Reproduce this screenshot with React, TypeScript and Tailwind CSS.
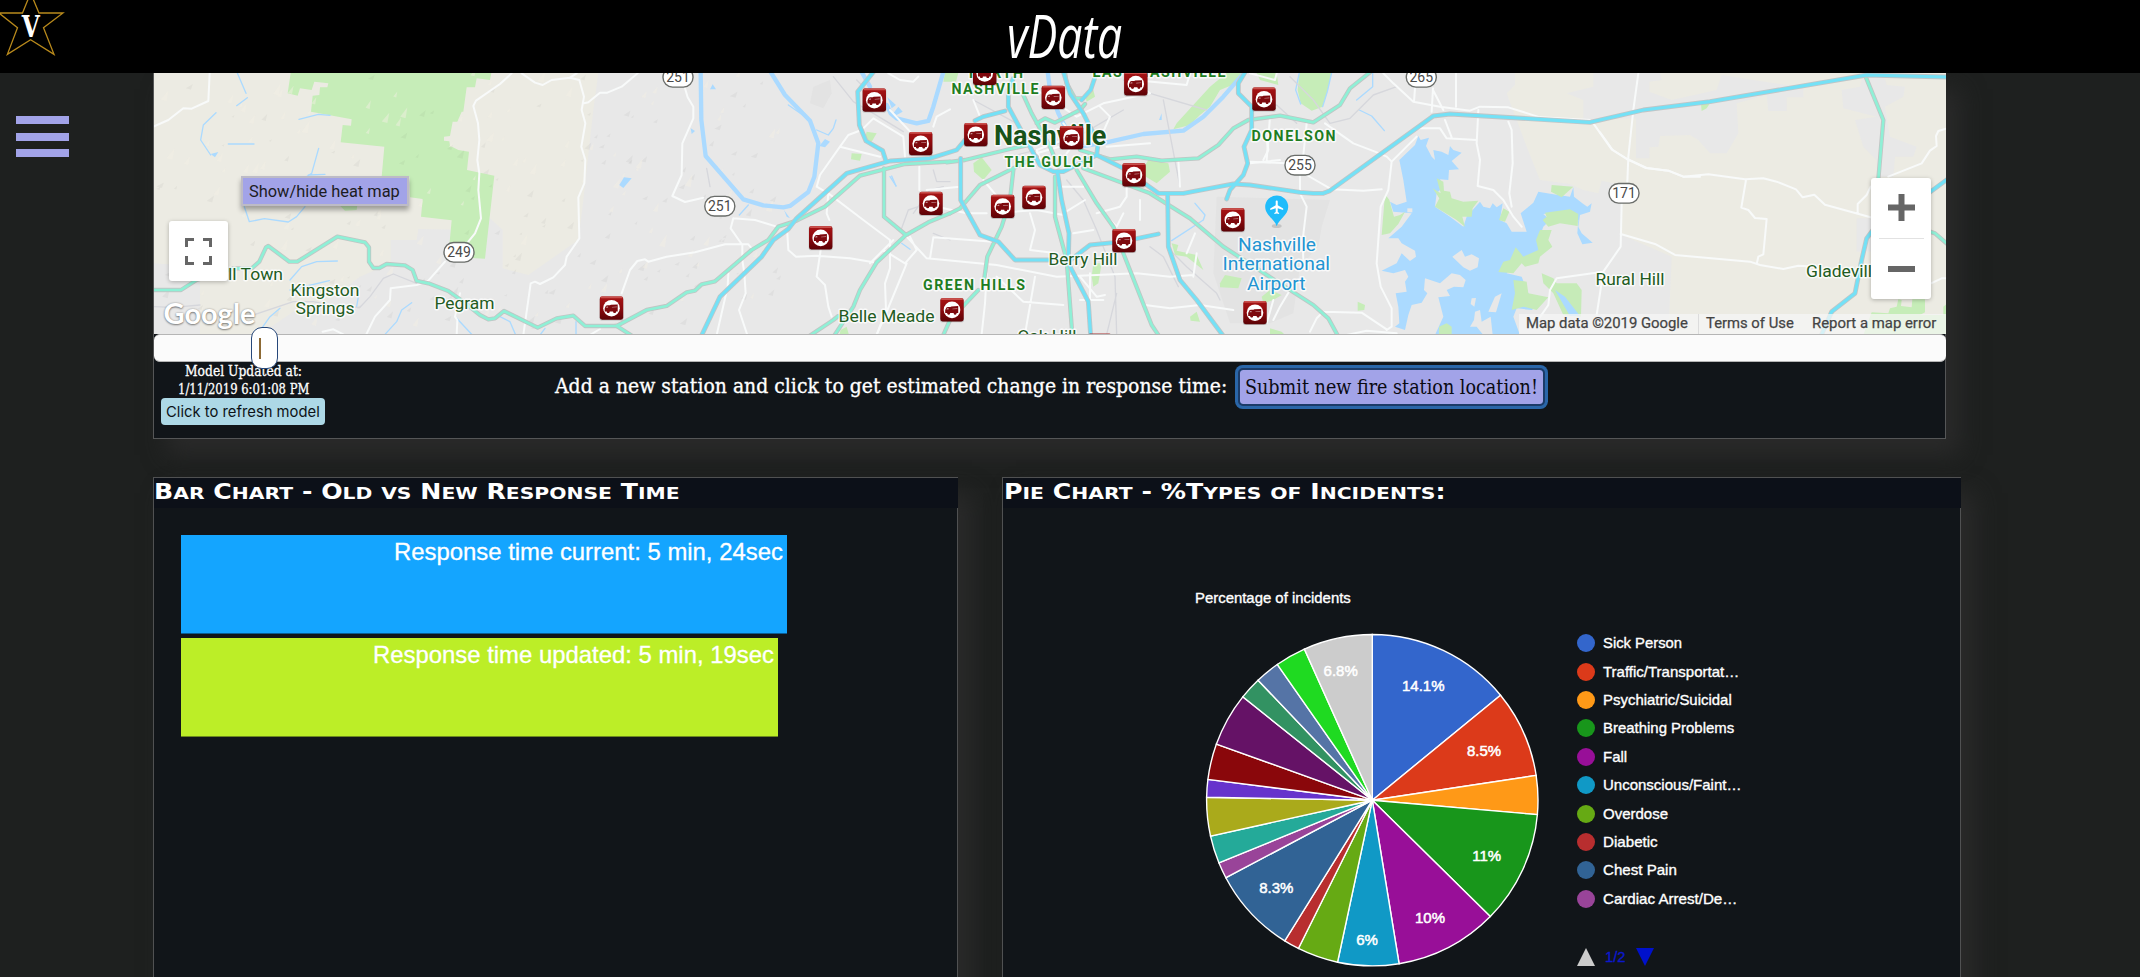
import { useLayoutEffect, useRef, useState, type ReactNode } from "react";

/* Squeezes or stretches one line of text to a given width. */
function Fit({ width, className = "", children }: { width: number; className?: string; children: ReactNode }) {
  const ref = useRef<HTMLSpanElement>(null);
  const [scale, setScale] = useState(1);
  useLayoutEffect(() => {
    if (ref.current) setScale(width / ref.current.offsetWidth);
  }, [width]);
  return (
    <span className={"inline-block whitespace-nowrap " + className} style={{ width }}>
      <span ref={ref} className="inline-block origin-left" style={{ transform: `scaleX(${scale})` }}>
        {children}
      </span>
    </span>
  );
}

function Copperplate({ text, width }: { text: string; width: number }) {
  return (
    <Fit width={width} className="font-['DejaVu_Sans'] text-[20.5px] leading-[29px] font-bold text-white">
      {text.split("").map((c, i) =>
        /[a-z]/.test(c) ? (
          <span key={i} className="text-[16.5px]">
            {c.toUpperCase()}
          </span>
        ) : (
          c
        )
      )}
    </Fit>
  );
}

/* ---- Map geometry. Every shape is given in one of six sheets, drawn at 3x. ---- */

type Shape = [sheet: keyof typeof SHEETS, d: string];
const SHEETS = {
  a: "translate(0 0) scale(.33333)",
  b: "translate(500 60) scale(.33333)",
  c: "translate(850 0) scale(.33333)",
  d: "translate(1250 60) scale(.33333)",
  e: "translate(1600 60) scale(.33333)",
  f: "translate(360 60) scale(.33333)",
};

const CREAM: Shape[] = [
  ["a", "M460,219H1795L1780,330L1750,600L1735,720L1585,825L1508,805V690L1465,650L1440,690L1255,687L1250,720H1172V790L1080,830L980,905L880,935L780,1003H600V800L460,790Z"],
  ["d", "M770,100L795,75V38H2090V830H1255L1265,590L1115,525V375L1055,362L1045,400L1000,390L960,372L870,360L830,260L800,180Z"],
];
const GREY: Shape[] = [
  ["d", "M1030,38V80L950,100L1000,120V180L1160,175V38Z"],
  ["e", "M108,38H180L185,60L148,65V95L215,120L350,90L365,45L460,60L560,75L610,85V112H560V153H505L500,105L410,130L415,220L380,280H330L295,240L270,225L180,228L175,260L148,262V295H108Z"],
  ["e", "M725,90L780,80L790,40H850L860,75L915,80L910,110L855,140L870,230L950,260L940,290L885,290L880,350H830V300L790,260L765,180L830,170L730,145Z"],
  ["e", "M770,475h45v100h-45z"],
  ["a", "M460,790L600,800V920L460,925Z"],
];
const AIRPORT: Shape[] = [
  ["d", "M-100,410L240,420L215,500L205,560L150,620L130,760L60,790H-60L-110,640Z"],
  ["b", "M940,80L990,60L995,100L970,145L930,130Z"],
];
const GREEN: Shape[] = [
  ["a", "M872,219L863,280L893,287L900,265L935,270L943,245L985,250L982,262L960,262L958,285L938,287L933,335L1055,358L1053,377L1028,375L1022,427L1153,440L1145,530L1228,530L1230,592L1268,597L1263,650L1355,661L1349,725L1345,770L1455,776L1483,527L1401,510L1407,455L1375,450L1350,437L1348,424L1332,422V410L1350,408L1358,365L1372,365L1385,335L1390,335L1400,262L1425,262L1430,235L1470,240L1474,219Z"],
  ["a", "M1018,615H1072L1070,630L1035,632Z"],
  ["c", "M285,219H325L318,245H280Z"],
  ["c", "M980,370L1080,260L1130,219H1180L1160,250L1110,270L1080,320L1050,345L1020,375L970,388Z"],
  ["c", "M1220,219H1280L1285,255L1230,240Z"],
  ["c", "M370,490L395,472L425,510L400,540L372,515Z"],
  ["c", "M5,460L35,462L30,482L3,478Z"],
  ["c", "M50,395L80,400L65,425L45,415Z"],
  ["c", "M895,480L955,490L960,515L920,550L870,520Z"],
  ["c", "M730,790H755L745,850L730,860L725,830Z"],
  ["c", "M1110,850L1125,825L1175,835L1165,865L1110,862Z"],
  ["c", "M1020,950L1040,935L1050,965L1022,962Z"],
  ["c", "M1235,890L1260,870L1295,885L1270,900L1240,910Z"],
  ["c", "M965,730L985,735L980,752L1040,765L1060,810L1010,770L975,765Z"],
  ["c", "M705,285L730,270L735,290L710,305Z"],
  ["b", "M1022,810L1040,800L1047,825H1018Z"],
  ["d", "M148,38H245L232,95L218,140L185,152L152,130L143,90Z"],
  ["d", "M323,725L345,735L343,750L323,752Z"],
  ["d", "M60,805L95,815L110,830H60Z"],
  ["e", "M303,132L330,130L320,145L305,153Z"],
  ["e", "M815,757L865,760L870,745L890,740L895,718L905,720L903,738L935,742L937,718H975V757L960,765H1038V825H790Z"],
  ["e", "M1030,740L1040,732V765H1030Z"],
];
const LAKE: Shape[] = [
  ["d", "M505,228L512,240L537,233L528,258L545,290L555,300L550,270L575,275L595,285L600,258L610,270L635,278L605,303L627,328L597,330L595,360L570,358L580,380L560,400L555,440L600,470L640,500L650,470L690,425L700,440L720,445L728,430L740,442L758,430L750,480L770,490L785,515L830,515L812,460L850,428L865,395L905,402L960,410L970,382L972,410L1000,432L1012,440L1025,430L1020,455L990,465L985,500L995,520L1028,548L997,553L982,520L985,480L950,455L880,462L900,480L880,500L865,540L870,570L835,612L800,600L770,640L815,650L835,700L850,720L870,735L845,750L800,745L790,770L810,825H555L580,770L565,712L600,708L590,690L612,680L640,682L647,660L630,645L605,640L570,670L525,655L522,690L532,700L515,728L485,735L475,765L465,810L435,800L448,790L445,740L437,700L470,695L465,665L475,650L465,630L430,640L395,632L440,610L455,580L480,603L498,590L495,572L455,550L445,535L415,535L455,500L485,460L430,455L420,425L440,435L470,425L460,360L448,300L495,255Z"],
  ["b", "M358,375L372,352L395,355L370,384Z"],
  ["b", "M630,88L638,73L648,88Z"],
  ["b", "M958,258L975,237L990,245L975,262Z"],
  ["b", "M572,205L585,213L575,222Z"],
  ["b", "M1162,112L1188,135L1175,145ZM1180,160L1195,140L1208,155L1190,165Z"],
  ["b", "M852,450L870,475L860,470Z"],
  ["c", "M927,360L935,340V360Z"],
  ["a", "M632,462L655,456L645,472Z"],
];
const ISLANDS: Shape[] = [
  ["d", "M607,590L635,570L645,590L665,583L687,595L683,622L660,632L640,622Z"],
  ["d", "M735,710L755,700L738,757L715,755Z"],
  ["d", "M665,715L678,714L673,740L662,732Z"],
  ["d", "M660,800L672,780L675,755L690,750L695,785L722,770L728,825H700L680,800Z"],
  ["d", "M472,445h15v12h-15z"],
];
const SHORE: Shape[] = [
  ["d", "M560,355L580,365L582,392L600,395L605,415L640,425L685,422L668,445L665,470L637,470L645,500L620,480L555,440L568,415L548,385L572,400Z"],
  ["d", "M405,402L418,420L432,470L450,465L465,455L445,492L420,520L395,525Z"],
  ["d", "M905,375L970,380L935,412L903,395Z"],
  ["d", "M885,458L960,448L985,462L983,498L930,490L895,500L878,480L890,470Z"],
  ["d", "M870,510L905,510L895,540L907,560L870,590L865,610L825,620L815,610L790,640L745,636L760,605L780,600L797,562L820,590L865,570L858,540Z"],
  ["d", "M790,660L830,665L835,700L895,712L860,750L820,740L785,750L795,700Z"],
  ["d", "M875,640L910,655L920,670L980,670L995,690L993,770L940,765L910,700L880,670Z"],
  ["d", "M747,480L760,445L778,455L765,485Z"],
  ["d", "M567,800L590,790L605,800V825H567Z"],
];
const INLETS: Shape[] = [["d", "M915,690L945,710L990,768H960Z"]];

const RIVERS: Shape[] = [
  ["b", "M602,36L604,180L617,288L730,418L790,436L850,442L870,438L925,396L943,350L955,250L930,182L855,105L812,36"],
  ["b", "M1085,36L1110,80M1160,135L1172,160L1190,175L1250,190L1285,183L1300,140L1330,36"],
  ["c", "M593,215L600,270L625,340L650,390L690,440L770,427L880,402L1000,392L1060,350L1120,290L1185,215"],
];
const CREEKS: Shape[] = [
  ["a", "M712,219L738,280M742,293L710,317M648,338L610,375L602,420L632,465M685,432H762M897,358L955,343L990,346M956,445L935,520L890,550M925,525L975,523"],
  ["a", "M733,620L748,665L793,656L865,666L890,650L915,620M870,840L905,800L950,785L1012,783M870,870L988,842M785,985L810,950L840,925M1155,1003L1190,965L1205,930L1235,908M1370,955L1415,1003M1070,920L1075,890"],
  ["b", "M0,770L30,785L47,825M120,825L135,805M228,785V825M718,465L745,435M865,135L930,180M950,210L985,225L1000,205L1008,180M1175,348L1188,378"],
  ["c", "M120,530L138,558M1035,610L1065,645L1060,660L965,722M155,730L180,748"],
  ["d", "M148,38L137,90L152,132M245,38L232,95L218,140M368,38V80L320,120M328,150L365,168L403,212"],
];
const RAILS: Shape[] = [
  ["a", "M460,920L520,922L600,915M760,945L880,905L940,905L1010,920L1080,922L1110,890L1150,835L1180,822L1250,850"],
  ["c", "M20,240L50,270M190,640L240,570L280,560M800,1003L795,830L740,690L700,600L650,540M770,1003L800,880M900,740L940,770L985,860M940,300L990,560M960,750L1010,800L1100,880L1110,900M370,300L500,370L540,420M820,330L700,400L600,440L480,470M1070,330L900,280L820,240M300,720L250,700"],
  ["d", "M120,50L190,120L240,190L300,175L370,105L440,80M0,140L80,135L140,190"],
  ["b", "M1000,50L1060,125L1120,160L1210,215M1205,505L1225,450L1255,440M1300,330L1310,365H1350M620,325L630,380"],
];
const STREETS: Shape[] = [
  ["f", "M485,40L525,68L548,75L575,60L630,53L658,60L672,110L665,150L676,190L664,260L676,300L673,370L655,412L658,535L620,590L615,615L580,652L540,672L525,665L512,670L490,825M630,53L650,40M672,130L685,127L720,98L742,98L785,80L833,40"],
  ["f", "M455,40L420,72L348,122L340,138L354,190L358,240L352,300L358,340L355,390L363,475L345,520L325,545M255,605L205,662L170,675L92,685L90,720L45,770L18,825M300,700L285,770L292,780L290,825"],
  ["a", "M460,380L505,360L550,325L575,326L625,303L629,219M968,995L1000,988L1030,1003"],
  ["b", "M365,700L390,630L412,603L435,598L445,605L500,590L585,577L675,553H745L755,565M555,85L563,112L580,140V175L547,250L545,345L517,408L555,426L610,413M700,475L765,480L830,500M700,475L692,505L727,555V600L733,640L737,700L717,750L742,825M685,640L683,680L650,825M270,825L300,807"],
  ["b", "M862,520L865,570L888,590L950,587L1050,595L1120,607M962,570L950,650L975,675L985,740L995,770M950,380L985,400L1090,480L1170,540V625L1155,670L1158,750L1130,825M1020,260L960,345L950,380M1020,260L1045,225L1085,210L1120,175L1210,230L1215,290M1020,260L1140,290M1165,40L1200,60L1240,65L1255,50M985,400L980,460L988,480M1258,320V390M1300,200L1310,170L1350,148"],
  ["c", "M170,710L230,775L440,795L620,830L860,820L960,830L1030,825M250,712L430,725M250,712L240,775M180,710L200,750L165,790M430,640L560,630L640,645M540,640L555,690L540,750L620,760M555,830L525,1003M690,830L740,890L765,885M410,820L405,910L395,1003M440,830L520,905L640,915M985,480L990,560M740,640L810,620L830,590V560M780,660L800,680L820,640M1200,490L1290,480M1250,480L1260,350M885,915L960,925L1050,915L1150,930M1010,760L1035,700M100,750L165,790M130,720L60,790M170,790L100,960L80,1003M1040,760L1030,830"],
  ["c", "M370,300L390,350M120,330L185,400M560,270L680,350L760,310L900,280L850,240L1010,255L1020,219M750,320L780,350L740,440M640,370L680,420L650,460M560,460L700,420M580,500L560,450L640,420M400,540L450,600L430,640M330,560L230,570M770,440L900,430M870,600V660M260,620L350,640L410,640M1270,900L1250,970M720,820V970M690,900H760M620,530V560H700M705,600L640,640M670,700L730,690"],
  ["d", "M400,40L430,70L490,125L570,140L660,152L690,140L775,142L870,172L1020,180M549,85L545,155M618,40V140M495,85L492,125M549,90L580,150M1030,190L1085,268L1130,297L1190,324L1255,332L1300,350H1350M1165,40L1150,150L1135,290L1132,365M1115,430L1112,560L1060,635L920,655L900,690L895,735L850,800M1060,635L1040,765"],
  ["d", "M500,205H570L590,235L680,240M605,232L585,180M500,230L425,305L415,390L392,440L380,610L392,680L425,745V800L410,810M225,190L310,250L375,275L410,290L425,305M685,150L680,250L690,300L683,378L730,390L760,420L790,470L815,500M775,185L785,210L788,310L778,400L785,440"],
  ["d", "M150,345V400L170,440L158,540L160,600M170,345L245,388L340,392L395,388M160,285L170,190M0,305L110,310M40,300L55,270L50,240M220,755L335,758L410,808M180,815L200,775L220,755M290,825L350,812L440,820M70,780L90,740L120,690M0,40L75,60L80,40"],
  ["e", "M0,217L38,270L82,297L138,324L205,332L250,350L325,343L435,358L490,355L530,365L588,388L608,412L643,404L675,434L812,472M438,360L424,443L445,450L465,474L500,477L490,583L475,590L470,612M62,522L165,552L225,585L450,605L480,615L550,627L595,617L650,620M773,460V432L800,405L812,380M865,350L965,310L990,272L1010,258L1008,228L1015,213L1038,206M993,670L1025,655H1038"],
];
const ARTERIES: Shape[] = [
  ["a", "M456,870H543L590,840L700,805H755L778,785L798,742L805,738L868,785H892L1012,710L1095,727L1107,742V785L1120,804H1138L1160,792L1215,796L1238,810L1250,843L1285,850L1345,873L1390,905L1440,945L1465,958L1485,955L1512,933L1613,983L1670,955L1720,947L1755,978H1850L1940,930L2000,918L2060,877L2085,872L2105,853L2145,844L2255,750L2305,720L2335,680L2390,662L2475,620L2580,527L2715,492L2850,485"],
  ["b", "M350,798L400,830M1152,325V470L1218,525L1130,607L1080,690L1060,740L1002,828M1218,525L1285,487L1350,460M928,828L1000,780L1015,768"],
  ["c", "M290,487L345,480L480,447L560,430M300,640L330,625L390,555L500,500L560,470M490,510L480,600L455,680L412,770L403,835M385,870L300,960L280,1005M520,285L545,340L600,440L625,500M560,370L585,355L615,368L690,330L705,312M645,217L650,250L675,295H700"],
  ["c", "M615,530V650L650,780L667,1005M680,510L740,610L790,680L820,760L905,975L925,1005M700,505L900,580L1020,655L1120,740L1320,870L1390,915L1435,955L1464,1008M690,450L780,478L860,470L935,482L1045,475L1105,435L1150,385L1195,360L1290,347L1390,367L1470,315L1500,265L1560,217"],
  ["e", "M797,50L850,180L835,358M990,515L1005,520L1042,552"],
];
const HIGHWAYS: Shape[] = [
  ["b", "M1120,36L1073,95L1078,195L1098,243L1148,272L1157,300M603,830L660,710L785,590L820,540L865,507L890,475L1040,340L1170,303L1290,295L1370,270L1395,240"],
  ["c", "M375,362L400,350L465,333M490,235L475,270V320L545,450L570,495L610,515H640L690,490L740,465L745,425L725,390L700,340L660,280L640,215M740,465L820,505L925,580H1000L1150,552L1200,555L1350,577L1390,580H1420L1440,572L1750,348L1800,342L2220,367L2380,330L2580,305L3050,225L3290,231"],
  ["c", "M953,585L955,740L990,840L1040,900L1120,1008M622,515L635,600L657,700L655,790L715,905L722,1008M332,475V600L390,705L445,725L495,780H600M655,785L720,735L790,728L860,716L925,702M1185,217L1165,250V280L1205,320V390L1182,440L1193,490L1180,525L1140,570L1130,597M740,217L722,270L695,300"],
  ["e", "M985,400L1042,358M830,495L800,535L785,600L765,700L695,755L663,828"],
];

function Fill({ shapes, color }: { shapes: Shape[]; color: string }) {
  return (
    <g fill={color}>
      {shapes.map(([s, d], i) => (
        <path key={i} transform={SHEETS[s]} d={d} />
      ))}
    </g>
  );
}
function Line({ shapes, color, width }: { shapes: Shape[]; color: string; width: number }) {
  return (
    <g fill="none" stroke={color} strokeWidth={width} strokeLinejoin="round" strokeLinecap="round">
      {shapes.map(([s, d], i) => (
        <path key={i} transform={SHEETS[s]} d={d} />
      ))}
    </g>
  );
}

/* Hill shading: short slivers strewn over the western half. */
const HILLS = (() => {
  let seed = 11;
  const rnd = () => (seed = (seed * 16807) % 2147483647) / 2147483647;
  return Array.from({ length: 260 }, () => {
    const x = 156 + rnd() * 620;
    const y = 75 + rnd() * 255;
    const l = 3 + rnd() * 5;
    const k = rnd();
    return { d: `M${x.toFixed(1)},${y.toFixed(1)}l${l.toFixed(1)},${(-l * (0.5 + k)).toFixed(1)}l${(-l / 4).toFixed(1)},${(l * (0.7 + k)).toFixed(1)}z`, light: k > 0.55 };
  });
})();

type Label = [text: string, x: number, y: number, width: number, kind: "town" | "area" | "city" | "poi"];
const LABELS: Label[] = [
  ["ll Town", 228, 279.5, 55, "town"],
  ["Kingston", 290.5, 296, 69, "town"],
  ["Springs", 295.5, 314, 59, "town"],
  ["Pegram", 434.5, 309, 60, "town"],
  ["Belle Meade", 838.5, 322, 96, "town"],
  ["Berry Hill", 1048.5, 265, 69, "town"],
  ["Rural Hill", 1595.5, 285, 69, "town"],
  ["Gladevill", 1806, 277, 66, "town"],
  ["Oak Hill", 1017.5, 342, 59, "town"],
  ["GREEN HILLS", 923, 290.3, 102, "area"],
  ["THE GULCH", 1004.5, 166.7, 88.5, "area"],
  ["NORTH", 969, 78.2, 54, "area"],
  ["NASHVILLE", 951.5, 93.7, 87, "area"],
  ["EAST NASHVILLE", 1092.5, 77.2, 133, "area"],
  ["DONELSON", 1251.5, 140.5, 84, "area"],
  ["Nashville", 994, 145, 112.5, "city"],
  ["Nashville", 1238, 251, 78, "poi"],
  ["International", 1222.5, 270.3, 107.5, "poi"],
  ["Airport", 1247, 289.7, 58.5, "poi"],
];
const KIND = {
  town: "fill-[#1f5c22] text-[17.3px]",
  area: "fill-[#1e7d22] text-[14.2px] font-bold",
  city: "fill-[#175218] text-[28.5px] font-bold",
  poi: "fill-[#2294d2] text-[19px]",
};

const SHIELDS: [string, number, number][] = [
  ["249", 459, 252.3],
  ["251", 678, 77.3],
  ["251", 719.8, 206.2],
  ["255", 1300, 165.2],
  ["265", 1421.3, 77.3],
  ["171", 1624, 193.3],
];

const STATIONS: [number, number][] = [
  [874.3, 100.2], [920.7, 143.7], [975.8, 134.7], [984.7, 73.4], [1053.3, 97.5], [1135.8, 84], [1264, 99.2], [1071.5, 137.7],
  [1134, 175], [931, 203.5], [1002.7, 206.5], [1034, 197.5], [1124, 240.7], [1232.8, 219.9], [952, 309.9], [1255, 312.7],
  [820.7, 237.9], [611.5, 308.2], [1099.7, 345.4],
];

function Station({ x, y }: { x: number; y: number }) {
  return (
    <g transform={`translate(${x} ${y})`}>
      <rect x="-12" y="-11.8" width="24" height="24.2" rx="2.6" fill="#00000030" />
      <rect x="-11.7" y="-11.7" width="23.4" height="23.2" rx="2.4" fill="url(#station)" />
      <rect x="-11" y="-11.6" width="22" height="1.6" rx=".8" fill="#c9504c" />
      <circle r="8.3" fill="#fff" />
      <path d="M-6.8,.2L-5.6,-2.4L-4.2,-3H-1.6L-.6,-3.4L6.2,-3.8V3.2H4.6A1.5,1.5 0 0 1 1.6,3.2H-1.8A1.5,1.5 0 0 1 -4.8,3.2H-6.8Z" fill="#7e090e" />
      <path d="M-5.6,-.4L-4.8,-1.8H-3.4V-.4ZM.4,-1.2L5.4,-1.6V-1L.4,-.6Z" fill="#fff" opacity=".55" />
      <circle cx="-3.3" cy="3.5" r="1.1" fill="#7e090e" />
      <circle cx="3.1" cy="3.5" r="1.1" fill="#7e090e" />
    </g>
  );
}

function MapCanvas() {
  return (
    <svg className="block h-[261px] w-[1792px]" viewBox="154 73 1792 261">
      <defs>
        <linearGradient id="station" x1="0" y1="0" x2="0" y2="1">
          <stop offset="0" stopColor="#a81415" />
          <stop offset=".5" stopColor="#8c0a0e" />
          <stop offset="1" stopColor="#5c0206" />
        </linearGradient>
      </defs>
      <rect x="154" y="73" width="1792" height="261" fill="#e8e8e8" />
      <Fill shapes={CREAM} color="#ecebe3" />
      <Fill shapes={GREY} color="#e8e8e8" />
      <Fill shapes={AIRPORT} color="#e3e3e3" />
      <Fill shapes={GREEN} color="#c6edb8" />
      <g>
        {HILLS.map((h, i) => (
          <path key={i} d={h.d} fill={h.light ? "#f3f0e4" : "#000"} opacity={h.light ? 0.45 : 0.035} />
        ))}
      </g>
      <Fill shapes={LAKE} color="#abdaff" />
      <Fill shapes={ISLANDS} color="#e8e8e8" />
      <Fill shapes={SHORE} color="#c6ebb8" />
      <Fill shapes={INLETS} color="#abdaff" />
      <Line shapes={RIVERS} color="#abdaff" width={13} />
      <Line shapes={CREEKS} color="#abdaff" width={4} />
      <Line shapes={RAILS} color="#d6d7dc" width={4} />
      <Line shapes={STREETS} color="#f8fafa" width={6} />
      <Line shapes={ARTERIES} color="#c1c5c4" width={13} />
      <Line shapes={ARTERIES} color="#8ff0d6" width={8} />
      <Line shapes={HIGHWAYS} color="#c1c5c6" width={14.5} />
      <Line shapes={HIGHWAYS} color="#74e1f6" width={9.5} />

      {SHIELDS.map(([n, x, y], i) => (
        <g key={i} transform={`translate(${x} ${y})`}>
          <rect x="-15" y="-9.8" width="30" height="19.6" rx="9.6" fill="#fff" stroke="#6a6d6a" strokeWidth="1.4" />
          <text y="5" textAnchor="middle" className="fill-[#4a4a4a] font-['Roboto'] text-[14px]">
            {n}
          </text>
        </g>
      ))}

      <g transform="translate(1276.7 207)">
        <ellipse cx="0" cy="19" rx="5" ry="2" fill="#00000022" />
        <path d="M0,19.2C-2,12.5,-11.5,8,-11.5,0A11.5,11.5 0 0 1 11.5,0C11.5,8,2,12.5,0,19.2Z" fill="#1fbcfb" />
        <path
          transform="translate(-7.8 -7.9) scale(.68)"
          fill="#fff"
          d="M21 16v-2l-8-5V3.5c0-.83-.67-1.5-1.5-1.5S10 2.67 10 3.5V9l-8 5v2l8-2.5V19l-2 1.5V22l3.5-1 3.5 1v-1.5L13 19v-5.5l8 2.5z"
        />
      </g>

      {LABELS.map(([t, x, y, w, k], i) => (
        <text
          key={i}
          x={x}
          y={y}
          textLength={w}
          lengthAdjust={k === "area" ? "spacing" : "spacingAndGlyphs"}
          stroke="#ffffffcc"
          strokeWidth="3"
          strokeLinejoin="round"
          paintOrder="stroke"
          className={"font-['Roboto'] " + KIND[k]}
        >
          {t}
        </text>
      ))}

      {STATIONS.map(([x, y], i) => (
        <Station key={i} x={x} y={y} />
      ))}
    </svg>
  );
}

/* ---- Pie chart ---- */

const SLICES: [end: number, color: string][] = [
  [50.7, "#3366cc"], [81.4, "#dc3a1a"], [95, "#ff9917"], [134.6, "#18961b"], [170.7, "#980f98"], [192.1, "#1099c6"],
  [206.5, "#66aa14"], [211.9, "#b82e2f"], [242.1, "#316395"], [247.8, "#994499"], [257.5, "#24aa99"], [271, "#aaaa1b"],
  [277.2, "#6633cc"], [289.8, "#8a070b"], [308.6, "#651266"], [316.4, "#329262"], [325, "#5574a6"], [335.8, "#1fda21"],
  [360, "#cccccc"],
];
const PERCENTS: [string, number, number][] = [
  ["14.1%", 1423.3, 685], ["8.5%", 1484, 749.3], ["11%", 1486.7, 854.5], ["10%", 1430, 916.7], ["6%", 1367, 938.2],
  ["8.3%", 1276.3, 886.7], ["6.8%", 1340.7, 669.3],
];
const CX = 1372.3;
const CY = 799.2;
const R = 165.7;

function Pie() {
  const pt = (a: number) => {
    const r = (a * Math.PI) / 180;
    return `${(CX + R * Math.sin(r)).toFixed(2)},${(CY - R * Math.cos(r)).toFixed(2)}`;
  };
  return (
    <svg className="block h-[352px] w-[370px]" viewBox="1190 625 370 352">
      {SLICES.map(([end, color], i) => (
        <path key={i} d={`M${CX},${CY}L${pt(i ? SLICES[i - 1][0] : 0)}A${R},${R} 0 0 1 ${pt(end)}Z`} fill={color} stroke="#fff" strokeWidth="1.4" />
      ))}
      {PERCENTS.map(([t, x, y]) => (
        <text
          key={t}
          x={x}
          y={y + 5.3}
          textAnchor="middle"
          stroke="#fff"
          strokeWidth=".5"
          className="fill-white font-['Liberation_Sans'] text-[15px]"
        >
          {t}
        </text>
      ))}
    </svg>
  );
}

const LEGEND: [string, string, number][] = [
  ["Sick Person", "bg-[#3366cc]", 79],
  ["Traffic/Transportat…", "bg-[#dc3a1a]", 136],
  ["Psychiatric/Suicidal", "bg-[#ff9917]", 128.5],
  ["Breathing Problems", "bg-[#18961b]", 131.5],
  ["Fall", "bg-[#980f98]", 24],
  ["Unconscious/Faint…", "bg-[#1099c6]", 138],
  ["Overdose", "bg-[#66aa14]", 65],
  ["Diabetic", "bg-[#b82e2f]", 54.5],
  ["Chest Pain", "bg-[#316395]", 73.5],
  ["Cardiac Arrest/De…", "bg-[#994499]", 134],
];

function Logo() {
  return (
    <svg className="block h-[60px] w-[66px]" viewBox="0 0 66 60">
      <path
        d="M30.6,-7L39,13H63L43.5,27.8L54,54.3L30.6,39.8L7.4,54.3L17.5,27.8L-1,13H22.5Z"
        fill="none"
        stroke="#b98a1c"
        strokeWidth="1.3"
      />
      <text x="21.7" y="37" textLength="18" lengthAdjust="spacingAndGlyphs" className="fill-white font-['DejaVu_Serif'] text-[29px] font-bold">
        V
      </text>
    </svg>
  );
}

function MapPanel() {
  return (
    <section className="h-[366px] w-[1793px] shrink-0 border-r border-b border-l border-[#555657] bg-[#111519] shadow-[14px_16px_22px_#2a2a2a]">
      <div className="relative h-[261px] w-[1792px] overflow-hidden">
        <MapCanvas />
        <button className="absolute top-[103px] left-[87px] h-[30px] w-[168px] border-2 border-[#bdbbc6] bg-[#a2a3e8] text-left shadow-[0_4px_5px_#0005]">
          <Fit width={151} className="ml-[6px] font-['Roboto'] text-[16.5px] leading-[23px] text-[#1c1c22]">
            Show/hide heat map
          </Fit>
        </button>
        <div className="absolute top-[148px] left-[15px] flex h-[60px] w-[59px] items-center justify-center rounded-[3px] bg-white shadow-[0_1px_4px_#0004]">
          <svg className="size-[27px]" viewBox="0 0 27 27" fill="none" stroke="#666" strokeWidth="3">
            <path d="M1.5,9V1.5H9M18,1.5H25.5V9M25.5,18V25.5H18M9,25.5H1.5V18" />
          </svg>
        </div>
        <div className="absolute top-[224px] left-[9.5px] [text-shadow:0_0_2px_#0005,0_1px_2px_#0006]">
          <Fit width={92} className="font-['Lato'] text-[29px] leading-[32px] font-bold text-white">
            Google
          </Fit>
        </div>
        <div className="absolute top-[105px] left-[1717px] flex h-[121px] w-[60px] flex-col items-center rounded-[3px] bg-white shadow-[0_1px_4px_#0004]">
          <svg className="h-[60px] w-[27px]" viewBox="0 0 27 60" stroke="#666" strokeWidth="6">
            <path d="M0,29.5H27M13.5,16V43" />
          </svg>
          <div className="h-px w-[45px] bg-[#e2e2e2]" />
          <svg className="h-[60px] w-[27px]" viewBox="0 0 27 60" stroke="#666" strokeWidth="6">
            <path d="M0,30H27" />
          </svg>
        </div>
        <div className="absolute right-0 bottom-0 flex h-[20px] w-[427px] font-['Roboto'] text-[15.5px] leading-[19px] text-[#444] [-webkit-text-stroke:0.25px_#444]">
          <div className="w-[179px] bg-[#f5f5f5]/75 pl-[7px]">
            <Fit width={162}>Map data ©2019 Google</Fit>
          </div>
          <div className="flex w-[248px] border-l border-[#dcdcdc] bg-[#f5f5f5]/75 pl-[7px]">
            <Fit width={88}>Terms of Use</Fit>
            <Fit width={124} className="ml-[18px]">
              Report a map error
            </Fit>
          </div>
        </div>
      </div>

      <div className="relative z-10 h-[27.5px] w-[1792px] rounded-[6px] border-t border-b border-[#b5b5b5] bg-[#fbfbfb]">
        <div className="absolute top-[-8px] left-[97px] h-[42px] w-[27px] rounded-[11px] border-[1.5px] border-[#27487a] bg-white pt-[10px] pl-[6.5px]">
          <div className="h-[21px] w-[2px] bg-[#8d6a35]" />
        </div>
      </div>

      <div className="flex font-['DejaVu_Serif'] text-white">
        <div className="flex w-[178px] flex-col items-center">
          <Fit width={117} className="h-[18px] text-[14px] leading-[18px] [-webkit-text-stroke:0.3px_#fff]">
            Model Updated at:
          </Fit>
          <Fit width={131} className="h-[18px] text-[14px] leading-[18px] [-webkit-text-stroke:0.3px_#fff]">
            1/11/2019 6:01:08 PM
          </Fit>
          <button className="h-[27px] w-[164px] rounded-[4px] bg-[#add8e6] pl-[5px] text-left">
            <Fit width={154} className="font-['Inter'] text-[15px] leading-[27px] text-[#0c1216]">
              Click to refresh model
            </Fit>
          </button>
        </div>
        <div className="flex flex-1 pt-[8px] pl-[223px]">
          <Fit width={672} className="text-[21px] leading-[32px] [-webkit-text-stroke:0.35px_#fff]">
            Add a new station and click to get estimated change in response time:
          </Fit>
          <button className="ml-[13px] h-[34px] w-[303px] rounded-[3px] bg-[#a2a3e8] pl-[4.5px] text-left ring-[5px] ring-[#2a66a8] outline-2 outline-[#1c3b68]">
            <Fit width={293} className="text-[21px] leading-[32px] text-[#0a0a12]">
              Submit new fire station location!
            </Fit>
          </button>
        </div>
      </div>
    </section>
  );
}

export default function App() {
  return (
    <div className="h-[977px] w-full overflow-hidden bg-[#1e201f]">
      <header className="relative z-20 flex h-[73px] bg-black">
        <Logo />
        <div className="pl-[941px]">
          <Fit width={115} className="font-['Open_Sans'] text-[60px] leading-[71px] text-white italic">
            vData
          </Fit>
        </div>
      </header>
      <div className="flex h-[904px]">
        <nav className="w-[153px] shrink-0 pt-[43px] pl-[16px]">
          <div className="flex w-[53px] flex-col gap-[8.5px]">
            <div className="h-[8px] bg-[#a2a3e8]" />
            <div className="h-[8px] bg-[#a2a3e8]" />
            <div className="h-[8px] bg-[#a2a3e8]" />
          </div>
        </nav>
        <main className="flex flex-col gap-[38px]">
          <MapPanel />
          <div className="flex shrink-0 gap-[44px]">
            <section className="h-[520px] w-[805px] border border-[#505152] bg-[#111519] shadow-[14px_16px_22px_#2a2a2a]">
              <h2 className="-mr-px h-[30px] bg-[#0c1018]">
                <Copperplate text="Bar Chart - Old vs New Response Time" width={525} />
              </h2>
              <div className="flex flex-col gap-[4px] pt-[27px] pl-[27px] font-['Liberation_Sans'] text-[24px] leading-[33px] text-white [-webkit-text-stroke:0.3px_#fff]">
                <div className="h-[99px] w-[606px] border-b border-[#0c5c92] bg-[#14a5ff] pr-[4px] text-right">
                  <Fit width={389}>Response time current: 5 min, 24sec</Fit>
                </div>
                <div className="h-[99px] w-[597px] border-b border-[#6c8a1c] bg-[#bcee27] pr-[4px] text-right">
                  <Fit width={401}>Response time updated: 5 min, 19sec</Fit>
                </div>
              </div>
            </section>
            <section className="h-[520px] w-[959px] border border-[#505152] bg-[#111519] shadow-[14px_16px_22px_#2a2a2a]">
              <h2 className="-mr-px h-[30px] bg-[#0c1018] pl-px">
                <Copperplate text="Pie Chart - %Types of Incidents:" width={441} />
              </h2>
              <div className="flex font-['Liberation_Sans'] text-[15px] text-white [-webkit-text-stroke:0.35px]">
                <div className="ml-[187px] w-[370px] pt-[79px]">
                  <Fit width={156} className="ml-[5px] h-[38px] leading-[20px]">
                    Percentage of incidents
                  </Fit>
                  <Pie />
                </div>
                <div className="pt-[121px] pl-[17px]">
                  {LEGEND.map(([name, color, w]) => (
                    <div key={name} className="flex h-[28.4px] items-center gap-[8px]">
                      <div className={"size-[18px] rounded-full " + color} />
                      <Fit width={w} className="leading-[20px]">
                        {name}
                      </Fit>
                    </div>
                  ))}
                  <div className="flex items-center pt-[34px]">
                    <svg className="h-[18px] w-[18px]" viewBox="0 0 18 18">
                      <path d="M9,0L18,18H0Z" fill="#cccccc" />
                    </svg>
                    <Fit width={20.5} className="ml-[10px] leading-[20px] text-[#0b18cd]">
                      1/2
                    </Fit>
                    <svg className="ml-[10px] h-[18px] w-[18px]" viewBox="0 0 18 18">
                      <path d="M0,0H18L9,18Z" fill="#0011cc" />
                    </svg>
                  </div>
                </div>
              </div>
            </section>
          </div>
        </main>
      </div>
    </div>
  );
}
